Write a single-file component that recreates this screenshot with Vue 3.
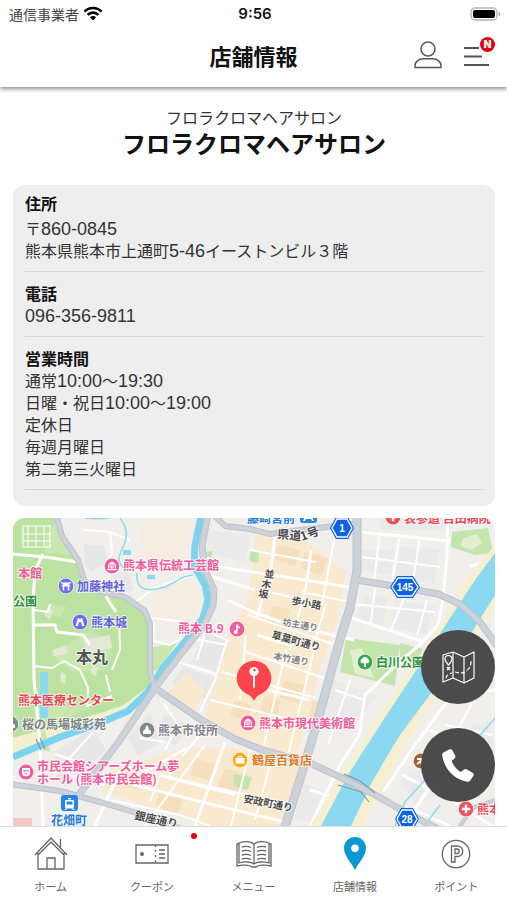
<template>
  <div class="app">
    <header class="header">
      <div class="status-bar">
        <div class="carrier">
          <span>通信事業者</span>
          <svg class="wifi" viewBox="0 0 20 15" fill="none" stroke="#000" stroke-width="2.6">
            <path d="M1.5 5.6a12 12 0 0 1 17 0" />
            <path d="M4.6 8.9a7.6 7.6 0 0 1 10.8 0" />
            <path d="M10 14.4 6.9 11.2a4.4 4.4 0 0 1 6.2 0z" fill="#000" stroke="none" />
          </svg>
        </div>
        <time class="clock">9:56</time>
        <svg class="battery" viewBox="0 0 31 14">
          <rect x="1" y="1" width="26" height="12" rx="4" fill="#fff" stroke="#b5b5b5" stroke-width="1.4" />
          <rect x="3" y="3" width="22" height="8" rx="2" fill="#000" />
          <path d="M28.6 5v4.4q1.8-.6 1.8-2.2T28.6 5z" fill="#aaa" />
        </svg>
      </div>
      <div class="title-bar">
        <h1 class="title">店舗情報</h1>
        <div class="actions">
          <button class="icon-btn" type="button" aria-label="マイページ">
            <svg viewBox="0 0 28 28" fill="none" stroke="#555" stroke-width="1.5">
              <circle cx="14" cy="8" r="7" />
              <path d="M1 26.5v-1.7c0-4.4 4-7 8.5-7h9c4.5 0 8.500 2.600 8.500 7v1.700z" stroke-linejoin="round" />
            </svg>
          </button>
          <button class="icon-btn" type="button" aria-label="メニューを開く">
            <svg viewBox="0 0 28 28" stroke="#555" stroke-width="1.8">
              <path d="M1 7h15M1 15.500h18M1 24h25" />
            </svg>
            <span class="new-badge">N</span>
          </button>
        </div>
      </div>
    </header>

    <main class="content">
      <div class="shop-name">
        <p class="shop-kana">フロラクロマヘアサロン</p>
        <h2 class="shop-main">フロラクロマヘアサロン</h2>
      </div>

      <!-- 店舗詳細 -->
      <section class="info-card">
        <div v-for="info in infos" :key="info.label" class="info-item">
          <h3 class="info-label">{{ info.label }}</h3>
          <p v-for="line in info.lines" :key="line" class="info-line">
            <span v-for="(part, i) in splitText(line)" :key="i" :class="{ latin: part.latin }">{{ part.text }}</span>
          </p>
        </div>
      </section>

      <!-- 地図 -->
      <section class="map">
        <svg class="map-canvas" viewBox="13 518 482 308" preserveAspectRatio="xMidYMin slice">
          <rect x="13" y="518" width="482" height="308" fill="#f1efec" />
          <path v-for="(area, i) in areas" :key="'a' + i" :d="area.d" :fill="area.fill" />
          <g fill="none" stroke="#fff" stroke-linejoin="round">
            <path v-for="(street, i) in streets" :key="'s' + i" :d="street.d" :stroke-width="street.w" />
          </g>
          <!-- 川 -->
          <path d="M495 545 467 578 430 640 370 728 309 828H362L384 785 410 738 495 605z" fill="#f6efd2" />
          <path d="M495 553 475 580 441 632 413 675 380 725 348 775 320 828H350L373 780 400 735 432 692 470 635 495 595z" fill="#8ad9f1" />
          <path d="M85 518q16 2 28-1M120 518q10 12 4 27c-5 10-9 18 2 24M137 573c-2 20 14 18 28 14 10-4 15-11 28-12M495 718 474 742M425 780 405 802 395 826M440 805 424 826" fill="none" stroke="#93d9ea" stroke-width="1.6" />
          <path d="M201 517 195 545 194 566 205 585 208 600 203 618 188 638 163 668 148 692 128 711 95 725 60 737 13 757" fill="none" stroke="#7dd3ee" stroke-width="7" stroke-linejoin="round" />
          <path d="M123 550h8v5h-8zM147 575h8v4h-8zM40 672h8v46h-8zM10 723h9v6h-9z" fill="#8ad9f1" />
          <!-- 幹線道路 -->
          <g fill="none" stroke-linejoin="round">
            <g stroke="#bcc2cb">
              <path v-for="(road, i) in roads" :key="'r' + i" :d="road.d" :stroke-width="road.w" />
            </g>
            <g stroke="#cdd1d8">
              <path v-for="(road, i) in roads" :key="'i' + i" :d="road.d" :stroke-width="road.w - 2" />
            </g>
          </g>
          <path d="M338 785 361 792 369 802M344 774 360 781 375 793M36 739l5 11M40 738l5 11" fill="none" stroke="#8b939c" stroke-width="1.2" />

          <!-- 道路名 -->
          <text
            v-for="label in labels"
            :key="label.text + label.x"
            class="map-label"
            :x="label.x"
            :y="label.y"
            :fill="label.color"
            :font-size="label.size || 12"
            :transform="label.rot ? `rotate(${label.rot} ${label.x} ${label.y})` : undefined"
          >{{ label.text }}</text>

          <!-- 県道番号 -->
          <g v-for="sign in signs" :key="sign.no" :transform="`translate(${sign.x} ${sign.y})`">
            <path :d="hexagon(sign.w + 2, 11)" fill="#0c62e8" />
            <path :d="hexagon(sign.w, 9)" fill="#0c62e8" stroke="#fff" stroke-width="1.3" />
            <text class="sign-no" y="4" font-size="10">{{ sign.no }}</text>
          </g>

          <!-- スポット -->
          <g v-for="spot in spots" :key="spot.x + '-' + spot.y" :transform="`translate(${spot.x} ${spot.y})`">
            <circle r="8" fill="#fff" />
            <circle r="7.400" :fill="spot.color" />
            <path :d="glyphs[spot.glyph]" fill="#fff" />
          </g>
          <g fill="#2586ea">
            <rect x="61" y="795" width="17" height="16" rx="3" />
            <rect x="300" y="508" width="17" height="15" rx="3" />
          </g>
          <path d="M66 800h7q1 0 1 1v6q0 1-1 1l1.500 2h-1.500l-1-1.500h-5L66 810h-1.500l1.500-2q-1 0-1-1v-6q0-1 1-1zM68 798h3v1.500h-3zM305 516h7l2 5h-2l-1-2h-5l-1 2h-2z" fill="#fff" />
          <path d="M66.500 801.500h6v3h-6z" fill="#2586ea" />

          <!-- 店舗ピン -->
          <path d="M254 701c-2-4-4-6-8-7.500a17.300 17.300 0 1 1 16 0c-4 1.500-6 3.500-8 7.500z" fill="#fb444b" />
          <circle cx="254" cy="671.500" r="4.600" fill="#fff" />
          <path d="M253 675h2v12l-1 1.500-1-1.500z" fill="#fff" />
          <circle cx="254.500" cy="670.300" r="1.200" fill="#fb444b" />
        </svg>

        <div class="map-actions">
          <button class="fab" type="button" aria-label="地図アプリで開く">
            <svg viewBox="0 0 34 34" fill="none" stroke="#fff" stroke-width="1.2" stroke-linejoin="round">
              <path d="M2 5 12 2l11 5 10-5v26l-10 5-11-5-10 4zM12 2v26M23 7v26" />
              <path d="M7.500 15C5 12 4 11 4 9a3.500 3.500 0 0 1 7 0c0 2-1 3-3.500 6z" />
              <path d="M6 17l3 3M9 17l-3 3" />
              <path d="M5 28q1-4 6-5M14 22q6 2 10 0l2-1M26 20q4-2 4-9" stroke-dasharray="4 2" />
            </svg>
          </button>
          <button class="fab" type="button" aria-label="電話をかける">
            <svg viewBox="0 0 34 34" fill="#fff">
              <path d="M2.500 4.500 8 1.500q2.500-1 3.500 1l2.700 5.200q.8 2-1 3.200l-2.400 1.600c-.8 1 4.500 9.500 9 11.500l3.200-2.600q1.500-1 3 0l5.500 3.400q2 1.400.8 3.200l-3 4.500q-1 1.500-3 1.300C13 31.500 3.500 21 1.200 7.500q-.3-2 1.300-3z" />
            </svg>
          </button>
        </div>
      </section>
    </main>

    <nav class="tab-bar">
      <a v-for="tab in tabs" :key="tab.name" class="tab" href="#">
        <span v-if="tab.dot" class="tab-dot"></span>
        <svg v-if="tab.name === 'home'" class="tab-icon" viewBox="0 0 36 36">
          <path d="M2 20 18 3l16 17M5 18v16h26V18M5 20 18 7l13 13M14 34V23h8v11M27.500 12V4" />
        </svg>
        <svg v-else-if="tab.name === 'coupon'" class="tab-icon" viewBox="0 0 36 36">
          <path d="M2 10h32v18H2zM25 15h6M25 19h6M25 23h6" />
          <path d="M21.500 10v18" stroke-dasharray="2 3" />
          <circle cx="8" cy="19" r="1.300" fill="#666" />
        </svg>
        <svg v-else-if="tab.name === 'menu'" class="tab-icon" viewBox="0 0 36 36">
          <path d="M18 9c-3-3-10-3-15-1v20c5-1.500 12-1.500 15 1 3-2.500 10-2.500 15-1V8c-5-2-12-2-15 1zM18 9v20" />
          <path d="M3 9H1v22c6-1.500 13-1 15 1h4c2-2 9-2.500 15-1V9h-2" />
          <path d="M6 12c3-.8 6-.8 9 .5M6 16c3-.8 6-.8 9 .5M6 20c3-.8 6-.8 9 .5M6 24c3-.8 6-.8 9 .5M30 12c-3-.8-6-.8-9 .5M30 16c-3-.8-6-.8-9 .5M30 20c-3-.8-6-.8-9 .5M30 24c-3-.8-6-.8-9 .5" />
        </svg>
        <svg v-else-if="tab.name === 'shop'" class="tab-icon filled" viewBox="0 0 36 36">
          <path fill-rule="evenodd" d="M18 35C14 27 7 21 7 13a11 11 0 0 1 22 0c0 8-7 14-11 22zM18 9.500a3.800 3.800 0 1 0 0 7.600 3.800 3.800 0 0 0 0-7.600z" />
        </svg>
        <svg v-else class="tab-icon" viewBox="0 0 36 36">
          <circle cx="18" cy="19" r="13.700" />
          <path d="M13.500 27V11h6a5.200 5.200 0 0 1 0 10.500H17V27zM17 14v4.500h2a2.200 2.200 0 0 0 0-4.500z" />
        </svg>
        <span class="tab-label">{{ tab.label }}</span>
      </a>
    </nav>
  </div>
</template>

<script setup>
const infos = [
  { label: '住所', lines: ['〒860-0845', '熊本県熊本市上通町5-46イーストンビル３階'] },
  { label: '電話', lines: ['096-356-9811'] },
  {
    label: '営業時間',
    lines: ['通常10:00〜19:30', '日曜・祝日10:00〜19:00', '定休日', '毎週月曜日', '第二第三火曜日']
  }
]

const tabs = [
  { name: 'home', label: 'ホーム' },
  { name: 'coupon', label: 'クーポン', dot: true },
  { name: 'menu', label: 'メニュー' },
  { name: 'shop', label: '店舗情報' },
  { name: 'point', label: 'ポイント' }
]

// 英数字と和文を分ける
function splitText(line) {
  return line
    .split(/([0-9:-]+)/)
    .filter(Boolean)
    .map((text) => ({ text, latin: /^[0-9:-]+$/.test(text) }))
}

const pink = '#ee5c9b'
const red = '#e8475a'
const purple = '#6262df'
const green = '#2f9144'
const gray = '#808286'
const dark = '#4c4c4c'

const areas = [
  // 城跡の公園
  { fill: '#bce2a1', d: 'M13 518H58L64 540 80 562 86 585 125 597 147 612 150 690 122 706 98 714 13 738z' },
  { fill: '#f3efcf', d: 'M13 738 98 714 122 706 150 685 146 700 120 718 70 733 13 752z' },
  { fill: '#c8e6ae', d: 'M153 647 177 643 160 668 153 672zM32 708 90 706 45 730 50 752 43 750z' },
  { fill: '#c9e8b1', d: 'M46 537 58 518 64 540 73 554 45 553zM50 604 66 606 60 618 52 615zM52 655 90 630 112 642 105 670 73 672z' },
  { fill: '#e4e6d6', d: 'M49 606 53 612 50 620 44 614zM83 640 110 635 112 648 88 653zM52 650 66 645 68 654 54 656zM61 672 66 674 65 684 60 682zM92 666 98 668 96 676 91 674z' },
  // 建物区画
  { fill: '#f7ece2', d: 'M140 520H192L188 565 145 560zM158 585 193 580 203 604 188 630 155 618z' },
  { fill: '#e8e7e8', d: 'M84 545 104 545 108 562 92 572 84 564zM112 575 128 572 134 590 120 594zM55 752 92 728 106 750 65 785 55 780zM128 738 150 712 160 742 138 756zM205 632 228 638 217 672 191 663zM164 714 190 725 175 745 158 736zM183 667 216 678 208 700 172 682z' },
  // 商店街
  { fill: '#f9e9cf', d: 'M256 535 300 537 346 572 336 625 320 668 305 730 295 756 240 742 205 720 212 690 230 630 248 600z' },
  { fill: '#f9e9cf', d: 'M112 770 185 748 238 748 300 768 286 826H205L100 790zM166 695 186 673 205 690 195 711z' },
  { fill: '#f6dfbd', d: 'M278 545 300 550 296 566 275 560zM305 552 328 558 322 575 301 568zM272 605 290 610 285 630 267 622zM235 700 252 706 246 722 230 714zM265 695 281 701 276 717 260 710zM196 758 218 765 212 782 190 774zM225 768 248 774 242 793 218 786zM160 790 184 796 178 814 155 806zM127 774 145 777 138 789 120 786zM284 680 305 686 300 704 280 698zM313 700 322 704 317 720 309 717z' },
  { fill: '#eaeaeb', d: 'M362 550H395L391 575 360 570zM400 546 440 550 434 584 395 578zM365 595 388 598 382 627 354 620zM395 600 437 606 425 634 390 629zM333 680 378 695 350 732 320 722zM380 518H445V530H380zM445 735 490 720 495 755 450 775zM400 780 430 765 445 790 415 805zM304 785 325 790 310 822 295 818zM206 530 250 535 246 562 204 552z' },
  { fill: '#c3e4aa', d: 'M452 532 488 528 493 553 475 555 451 547zM346 638 400 645 395 686 340 672zM400 643 423 649 418 660 400 657zM205 552 213 551 211 557 204 557zM251 549 259 552 258 563 249 561zM233 774 252 777 248 790 234 786z' },
  { fill: '#e3eed0', d: 'M463 538 477 534 482 543 472 550 460 546zM350 650 362 648 374 678 355 674z' },
  { fill: '#f2c9c7', d: 'M13 818H32V826H13z' }
]

const streets = [
  // 公園の園路
  { w: 3, d: 'M13 554 45 557 78 562M43 554 35 570 33 600 34 680 40 740 43 826M34 625 55 625 57 632 83 635 90 645M104 590 108 600 116 612' },
  { w: 1, d: 'M23 526H50M23 534H50M23 541H50M23 547H50M23 526V547M28 525V547M36 525V547M44 525V547M50 525V547' },
  { w: 2, d: 'M119 617 120 650 112 670M34 666 52 668 64 661 80 670 88 688 87 706 112 696M106 675 110 692M150 640 170 645 182 638M34 610 48 612 50 604' },
  { w: 2, d: 'M84 530 110 532 130 540M110 532 112 553 106 568M134 603 154 588 193 575M151 618 186 622M154 622 153 642M190 638 227 645M205 633 197 660M227 640 215 680 200 712M208 632 229 641M178 662 216 674' },
  // 中央の街区
  { w: 3, d: 'M275 535 271 568 264 592 257 618M200 564 305 580 356 588M210 576 255 590M257 635 290 645M228 600 255 613 290 625 354 640M311 550 307 582M268 690 310 700' },
  { w: 2, d: 'M250 550 316 562M262 590 311 602M248 615 336 645M246 652 330 680M222 672 316 698M210 700 310 724M286 650 264 745M315 646 288 755M326 604 312 650M334 540 322 605M302 592 350 602M246 635 240 700M307 582 290 650' },
  { w: 3, d: 'M225 742 195 826M187 748 130 780M120 770 95 826M130 784 215 805 285 822M128 767 200 785 292 805' },
  { w: 2, d: 'M250 750 231 826M205 745 145 826M164 704 178 724 165 750M176 726 200 735 182 756M140 738 165 742M50 780 93 732M70 775 105 785M55 754 90 766M178 758 168 778 235 795M160 775 150 802M272 758 255 820M110 800 180 815 210 826' },
  // 東側の街区
  { w: 3, d: 'M359 532 450 541M448 518 447 555 443 600 438 625 423 642 396 665 365 695 359 735 340 765 310 826M352 618 424 642M495 560 470 566' },
  { w: 2, d: 'M400 534 392 583M420 537 412 588M380 532 374 582M362 557 440 567M375 588 371 622M405 596 390 632M427 600 417 636M352 604 435 612M335 690 364 700M328 718 354 726M350 680 328 745M450 600 475 608 495 600' },
  { w: 3, d: 'M495 690 448 700 410 752 383 792M430 730 495 766M402 775 448 798 495 828M455 745 405 826M310 790 342 800' },
  { w: 2, d: 'M445 725 492 735M425 750 452 765M415 810 450 826M475 735 490 760 460 826M427 793 402 826M480 690 440 760' }
]

const roads = [
  { w: 6, d: 'M56 514 62 536 78 560 84 580 98 591 125 597 145 611 150 624 150 672 155 688' },
  { w: 7, d: 'M208 514 202 545 204 568 214 590 213 606 204 625 184 650 155 688 120 740 78 796' },
  { w: 7, d: 'M152 686 200 719 235 739 262 750 310 763 340 777 372 793 405 812 440 830' },
  { w: 6, d: 'M213 514 225 526 250 529 270 534 300 530 345 525 357 524' },
  { w: 9, d: 'M357 514 357 570 350 608 341 636 331 672 318 720 301 776 284 830' },
  { w: 7, d: 'M356 580 400 587 438 594 460 604 480 622 497 646' },
  { w: 6, d: 'M10 784 60 791 100 802 140 814 190 832' },
  { w: 4, d: 'M460 826 472 808 495 800' }
]

const labels = [
  { x: 247, y: 523, text: '藤崎宮前', color: '#287bdb' },
  { x: 404, y: 523, text: '表参道 吉田病院', color: red },
  { x: 277, y: 538, text: '県道', color: dark, rot: 6 },
  { x: 302, y: 541, text: '1号', color: dark, rot: -20 },
  { x: 264, y: 577, text: '並', color: dark, size: 10, rot: 8 },
  { x: 261, y: 587, text: '木', color: dark, size: 10, rot: 8 },
  { x: 258, y: 597, text: '坂', color: dark, size: 10, rot: 8 },
  { x: 123, y: 570, text: '熊本県伝統工芸館', color: pink },
  { x: 18, y: 578, text: '本館', color: pink },
  { x: 77, y: 591, text: '加藤神社', color: purple },
  { x: 13, y: 606, text: '公園', color: green },
  { x: 91, y: 627, text: '熊本城', color: purple },
  { x: 76, y: 663, text: '本丸', color: '#505558', size: 16 },
  { x: 178, y: 633, text: '熊本 B.9', color: pink },
  { x: 291, y: 604, text: '歩小路', color: dark, size: 10, rot: 10 },
  { x: 282, y: 625, text: '坊主通り', color: gray, size: 9, rot: 10 },
  { x: 271, y: 638, text: '草葉町通り', color: dark, size: 10, rot: 15 },
  { x: 273, y: 659, text: '本竹通り', color: gray, size: 9, rot: 10 },
  { x: 376, y: 667, text: '白川公園', color: green },
  { x: 18, y: 705, text: '熊本医療センター', color: red },
  { x: 22, y: 729, text: '桜の馬場城彩苑', color: gray },
  { x: 158, y: 735, text: '熊本市役所', color: gray },
  { x: 259, y: 728, text: '熊本市現代美術館', color: pink },
  { x: 252, y: 765, text: '鶴屋百貨店', color: '#db7a24' },
  { x: 37, y: 771, text: '市民会館シアーズホーム夢', color: pink },
  { x: 37, y: 784, text: 'ホール (熊本市民会館)', color: pink },
  { x: 51, y: 825, text: '花畑町', color: '#287bdb' },
  { x: 134, y: 819, text: '銀座通り', color: dark, size: 11, rot: 12 },
  { x: 243, y: 802, text: '安政町通り', color: dark, size: 10, rot: 11 },
  { x: 477, y: 814, text: '熊本', color: red }
]

const signs = [
  { no: 1, x: 342, y: 528, w: 10 },
  { no: 145, x: 405, y: 587, w: 13 },
  { no: 28, x: 407, y: 819, w: 10 }
]

const spots = [
  { x: 112, y: 566, color: pink, glyph: 'museum' },
  { x: 66, y: 586, color: '#6f6df0', glyph: 'torii' },
  { x: 80, y: 622, color: '#6f6df0', glyph: 'castle' },
  { x: 237, y: 629, color: pink, glyph: 'note' },
  { x: 393, y: 517, color: '#f04d5b', glyph: 'cross' },
  { x: 365, y: 662, color: '#35a94c', glyph: 'tree' },
  { x: 11, y: 724, color: '#84878b', glyph: 'hall' },
  { x: 147, y: 730, color: '#84878b', glyph: 'hall' },
  { x: 248, y: 723, color: pink, glyph: 'museum' },
  { x: 240, y: 760, color: '#fbac17', glyph: 'bag' },
  { x: 26, y: 772, color: pink, glyph: 'mask' },
  { x: 421, y: 761, color: '#a56035', glyph: 'runner' },
  { x: 466, y: 809, color: '#f25362', glyph: 'cross' }
]

const glyphs = {
  museum: 'M-4.500-1.500 0-4.500 4.500-1.500zM-4-1h1.500v3.500H-4zM-1.500-1H-.3v3.500h-1.200zM.5-1h1.200v3.500H.5zM2.700-1H4v3.500H2.700zM-4.500 3h9v1.200h-9z',
  torii: 'M-5-4Q0-3 5-4v1.600H3.300V-.8h1V.4h-1V4.500H1.800V.4h-3.600v4.100h-1.500V.4h-1V-.8h1v-1.600H-5z',
  castle: 'M-4.500 4-2-4h1l1 2 1-2h1l2.500 8H2L1 0H-1L-2 4z',
  note: 'M-1-4.500 1-4.500Q1-2.500 3-2v1.500Q1.500-1 .7-2V2.500A2 2 0 1 1-1 1z',
  cross: 'M-1.200-4.200h2.400v3h3v2.400h-3v3h-2.400v-3h-3v-2.400h3z',
  tree: 'M0-5a3 3 0 0 1 3 2 2.300 2.300 0 0 1 0 4.300H.8V5H-.8V1.300H-3A2.300 2.300 0 0 1-3-3a3 3 0 0 1 3-2z',
  hall: 'M0-5 1.500-2.500V-1L4 1v3H-4V1L-1.500-1v-1.500z',
  bag: 'M-4.500-2H-2v-2h4v2h2.500v5.500h-9zM-1-2h2v-1h-2z',
  mask: 'M-4-4H4V1Q4 4 0 4.500-4 4-4 1zM-2.500-2v1.500h2V-2zM.5-2v1.500h2V-2zM-2 1Q0 3 2 1z',
  runner: 'M-4-3H1L3-1 1 1 3 4H1L-1 2-4 4v-2L-1-1H-4z'
}

function hexagon(w, h) {
  const k = Math.round(w / 2)
  return `M${-w} 0 ${-k} ${-h}H${k}L${w} 0 ${k} ${h}H${-k}z`
}
</script>

<style>
body {
  margin: 0;
  background: #fff;
}
</style>

<style scoped>
.app {
  display: flex;
  flex-direction: column;
  min-height: 100vh;
  color: #333;
  background: #fff;
  font-family: "Noto Sans CJK JP", "Liberation Sans", sans-serif;
}

h1,
h2,
h3,
p {
  margin: 0;
}

button {
  padding: 0;
  border: none;
  background: none;
  cursor: pointer;
}

.header {
  position: relative;
  z-index: 2;
  background: #fff;
  box-shadow: 0 2px 4px rgba(0, 0, 0, 0.45);
}

.status-bar {
  display: grid;
  grid-template-columns: 1fr auto 1fr;
  align-items: center;
  height: 27px;
  padding: 0 6px 0 9px;
}

.carrier {
  display: flex;
  align-items: center;
  gap: 4px;
  font-size: 14px;
  line-height: 20px;
  color: #444;
}

.wifi {
  width: 20px;
  height: 15px;
}

.clock {
  font-family: Inter, "Liberation Sans", sans-serif;
  font-size: 15px;
  font-weight: 600;
  color: #111;
}

.battery {
  justify-self: end;
  width: 31px;
  height: 14px;
}

.title-bar {
  display: grid;
  grid-template-columns: 1fr auto 1fr;
  align-items: center;
  height: 56px;
  padding: 0 16px 4px;
}

.title {
  grid-column: 2;
  font-size: 22px;
  line-height: 32px;
  font-weight: 700;
  color: #111;
}

.actions {
  display: flex;
  justify-content: flex-end;
  gap: 21px;
}

.icon-btn {
  position: relative;
  width: 28px;
  height: 28px;
}

.icon-btn svg {
  display: block;
}

.new-badge {
  position: absolute;
  top: -4px;
  right: -4px;
  width: 15px;
  height: 15px;
  border-radius: 50%;
  background: #e3000f;
  color: #fff;
  font-family: Inter, sans-serif;
  font-size: 10px;
  font-weight: 900;
  line-height: 15px;
  text-align: center;
}

.content {
  flex: 1;
  display: flex;
  flex-direction: column;
  gap: 12px;
  padding: 0 12px 0 13px;
}

.shop-name {
  padding: 19px 0 16px;
  text-align: center;
}

.shop-kana {
  font-size: 16px;
  line-height: 23px;
}

.shop-main {
  font-size: 24px;
  line-height: 28px;
  font-weight: 700;
  color: #111;
}

.info-card {
  padding: 0 12px 16px;
  border-radius: 12px;
  background: #eee;
}

.info-item {
  padding: 11px 0 10px;
  border-bottom: 1px solid #d6d6d6;
}

.info-item:first-child {
  padding-top: 8px;
}

.info-item:first-child .info-label {
  margin-bottom: 3px;
}

.info-label {
  font-size: 16px;
  line-height: 21px;
  font-weight: 700;
  color: #111;
}

.info-line {
  font-size: 16px;
  line-height: 22px;
}

.latin {
  font-family: "Liberation Sans", Arial, sans-serif;
  font-size: 18px;
  line-height: 1;
}

.map {
  position: relative;
  flex: 1;
  display: flex;
  border-radius: 12px 12px 0 0;
  overflow: hidden;
}

.map-canvas {
  flex: 1;
  width: 100%;
  min-width: 0;
}

.map-label {
  font-weight: 600;
  stroke: rgba(255, 255, 255, 0.7);
  stroke-width: 2px;
  stroke-linejoin: round;
  paint-order: stroke;
}

.sign-no {
  fill: #fff;
  font-family: "Liberation Sans", Arial, sans-serif;
  font-weight: 700;
  text-anchor: middle;
}

.map-actions {
  position: absolute;
  right: 0;
  bottom: 24px;
  display: flex;
  flex-direction: column;
  gap: 24px;
}

.fab {
  display: flex;
  align-items: center;
  justify-content: center;
  width: 74px;
  height: 74px;
  border-radius: 50%;
  background: #4b4b4b;
}

.fab svg {
  width: 34px;
  height: 34px;
}

.tab-bar {
  position: sticky;
  bottom: 0;
  z-index: 2;
  display: flex;
  height: 73px;
  border-top: 1px solid #ddd;
  background: #fff;
}

.tab {
  position: relative;
  flex: 1;
  display: flex;
  flex-direction: column;
  align-items: center;
  gap: 7px;
  padding-top: 8px;
  color: #666;
  text-decoration: none;
}

.tab-icon {
  width: 36px;
  height: 36px;
  fill: none;
  stroke: #666;
  stroke-width: 1.3px;
}

.tab-icon.filled {
  fill: #0a98d3;
  stroke: none;
}

.tab-label {
  font-size: 11px;
  line-height: 16px;
}

.tab-dot {
  position: absolute;
  top: 6px;
  right: 6px;
  width: 6px;
  height: 6px;
  border-radius: 50%;
  background: #dc0000;
}
</style>
